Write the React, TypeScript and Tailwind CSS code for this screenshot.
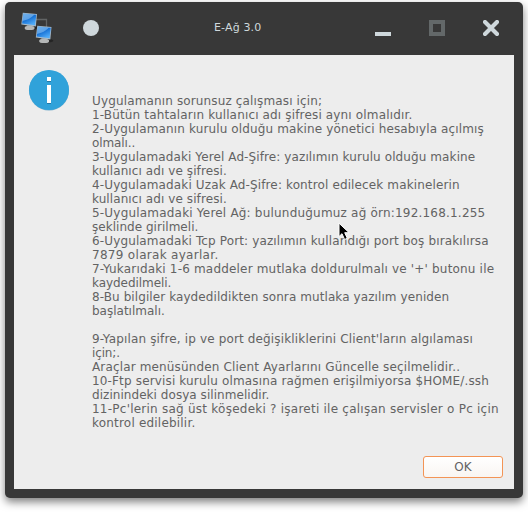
import React from 'react';

type Line = { text: string; spacing?: string };

const lines: Line[] = [
  { text: 'Uygulamanın sorunsuz çalışması için;', spacing: 'tracking-[0.14px]' },
  { text: '1-Bütün tahtaların kullanıcı adı şifresi aynı olmalıdır.', spacing: 'tracking-[0.155px]' },
  { text: '2-Uygulamanın kurulu olduğu makine yönetici hesabıyla açılmış', spacing: 'tracking-[0.13px]' },
  { text: 'olmalı..', spacing: 'tracking-[-0.1px]' },
  { text: '3-Uygulamadaki Yerel Ad-Şifre: yazılımın kurulu olduğu makine', spacing: 'tracking-[0.1px]' },
  { text: 'kullanıcı adı ve şifresi.', spacing: 'tracking-[0.09px]' },
  { text: '4-Uygulamadaki Uzak Ad-Şifre: kontrol edilecek makinelerin', spacing: 'tracking-[0.13px]' },
  { text: 'kullanıcı adı ve sifresi.', spacing: 'tracking-[0.09px]' },
  { text: '5-Uygulamadaki Yerel Ağ: bulunduğumuz ağ örn:192.168.1.255', spacing: 'tracking-[0.2px]' },
  { text: 'şeklinde girilmeli.', spacing: 'tracking-[0.03px]' },
  { text: '6-Uygulamadaki Tcp Port: yazılımın kullandığı port boş bırakılırsa', spacing: 'tracking-[0.135px]' },
  { text: '7879 olarak ayarlar.', spacing: 'tracking-[0.3px]' },
  { text: "7-Yukarıdaki 1-6 maddeler mutlaka doldurulmalı ve '+' butonu ile", spacing: 'tracking-[0.18px]' },
  { text: 'kaydedilmeli.', spacing: 'tracking-[-0.05px]' },
  { text: '8-Bu bilgiler kaydedildikten sonra mutlaka yazılım yeniden', spacing: 'tracking-[0.09px]' },
  { text: 'başlatılmalı.' },
  { text: '' },
  { text: "9-Yapılan şifre, ip ve port değişikliklerini Client'ların algılaması", spacing: 'tracking-[0.15px]' },
  { text: 'için;.', spacing: 'tracking-[-0.15px]' },
  { text: 'Araçlar menüsünden Client Ayarlarını Güncelle seçilmelidir..', spacing: 'tracking-[0.15px]' },
  { text: '10-Ftp servisi kurulu olmasına rağmen erişilmiyorsa $HOME/.ssh', spacing: 'tracking-[0.155px]' },
  { text: 'dizinindeki dosya silinmelidir.', spacing: 'tracking-[0.05px]' },
  { text: "11-Pc'lerin sağ üst köşedeki ? işareti ile çalışan servisler o Pc için", spacing: 'tracking-[0.24px]' },
  { text: 'kontrol edilebilir.', spacing: 'tracking-[0.2px]' },
];

function Computer({ x, y }: { x: number; y: number }) {
  return (
    <g transform={`translate(${x} ${y})`}>
      <ellipse cx="11" cy="15.2" rx="6.5" ry="2" fill="#1d1d1d" opacity=".7" />
      <path d="M5.5 11.5h5v3.5h-5z" fill="#888b8c" />
      <ellipse cx="8.3" cy="15.4" rx="5" ry="2.2" fill="#b5b7b7" />
      <path d="M1.5 0.3 15.7 1.6 14.5 14 0 12Z" fill="#a9bccb" />
      <path d="M2.1 1 15 2.3 13.8 12.8 0.8 11.1Z" fill="url(#screen)" />
      <path d="M2.1 1 13 2.1C10.5 5.5 5.5 7.8 1.2 8.4Z" fill="#a5d3fa" opacity=".5" />
    </g>
  );
}

function NetworkIcon() {
  return (
    <svg width="34" height="34" viewBox="20 11 34 34" className="block">
      <defs>
        <linearGradient id="screen" x1="0" y1="0" x2="0.6" y2="1">
          <stop offset="0" stopColor="#3a8fe0" />
          <stop offset=".5" stopColor="#1670d4" />
          <stop offset="1" stopColor="#50abf8" />
        </linearGradient>
      </defs>
      <path d="M36 19.5h10.5V27" fill="none" stroke="#626465" strokeWidth="1.3" />
      <Computer x={21.3} y={12.5} />
      <Computer x={35.8} y={25.5} />
    </svg>
  );
}

function TitleBar() {
  return (
    <header className="flex h-[53px] items-start">
      <div className="ml-[15px] mt-[9px] shrink-0">
        <NetworkIcon />
      </div>
      <div className="ml-[29px] mt-[18px] size-4 shrink-0 rounded-full bg-[#cfd8dc]" />
      <h1 className="ml-[115px] mt-[19px] w-[60px] whitespace-nowrap font-['DejaVu_Sans',sans-serif] text-[11px] leading-[14px] tracking-[0.15px] text-[#cfd8dc]">
        E-Ağ 3.0
      </h1>
      <div className="ml-auto mr-[24px] mt-[18px] flex gap-[38px]">
        <svg width="16" height="16" className="block">
          <path d="M0 12h16v4H0z" fill="#cfd8dc" />
        </svg>
        <svg width="16" height="16" className="block">
          <path d="M2 2h12v12H2z" fill="none" stroke="#636869" strokeWidth="4" />
        </svg>
        <svg width="16" height="16" className="block">
          <path d="M2 2 14 14M14 2 2 14" fill="none" stroke="#cfd8dc" strokeWidth="4.2" strokeLinecap="round" />
        </svg>
      </div>
    </header>
  );
}

function InfoIcon() {
  return (
    <svg width="42" height="42" viewBox="28 69 42 42" className="block">
      <circle cx="49" cy="90.5" r="20" fill="#2b86b5" opacity=".6" />
      <circle cx="49" cy="90" r="20" fill="#30a2da" />
      <path d="M47 78h4v4h-4zM47 86h4v18h-4z" fill="#2378a5" />
      <path d="M47 77h4v4h-4zM47 85h4v18h-4z" fill="#fff" />
    </svg>
  );
}

export default function App() {
  return (
    <div className="relative h-[512px] w-[528px] overflow-hidden bg-white px-[5px] pt-[2px] font-['DejaVu_Sans',sans-serif]">
      <div className="h-[496px] w-[518px] rounded-[5px] bg-[#383838] shadow-[0_4px_9px_rgba(0,0,0,0.5)]">
        <TitleBar />
        <main className="ml-[9px] flex h-[434px] w-[500px] flex-col bg-[#ededed]">
          <div className="flex">
            <div className="ml-[14px] mt-[14px] shrink-0">
              <InfoIcon />
            </div>
            <div className="ml-[22px] mt-[39px] text-[12px] leading-[14px] text-[#636363]">
              {lines.map((line, i) => (
                <div key={i} className="h-[14px] whitespace-nowrap">
                  <span className={line.spacing}>{line.text}</span>
                </div>
              ))}
            </div>
          </div>
          <button className="ml-auto mr-[11px] mt-auto mb-[11px] flex h-[22px] w-[80px] items-center justify-center rounded-[3px] border border-[#f39455] bg-linear-to-b from-white to-[#f9f5f2] text-[12px] leading-[14px] text-[#636363]">
            OK
          </button>
        </main>
      </div>
      <svg width="13" height="19" viewBox="0 0 13 19" className="absolute left-[338px] top-[222px]">
        <path d="M1 1.2v13.3l3-2.8 2.6 5.8 2.7-1.2-2.6-5.6h4.4z" fill="#000" stroke="#fff" strokeWidth="1" />
      </svg>
    </div>
  );
}
